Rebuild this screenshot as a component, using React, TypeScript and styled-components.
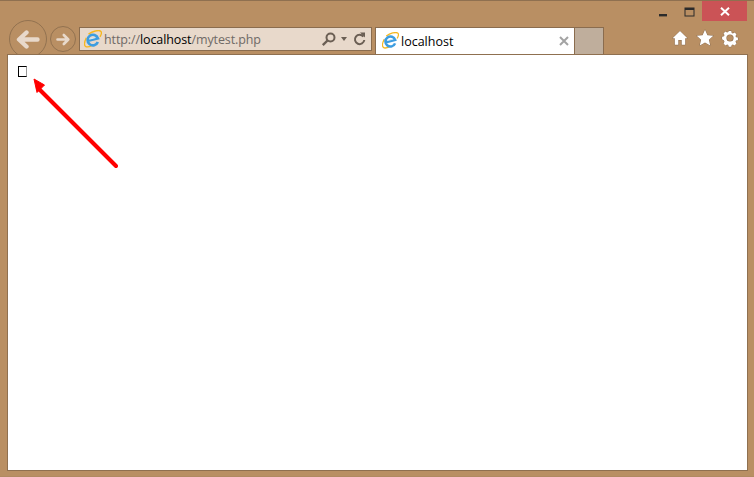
import React from "react";
import styled, { createGlobalStyle } from "styled-components";

const GlobalStyle = createGlobalStyle`
  html, body {
    margin: 0;
    padding: 0;
    background: #b98f63;
  }
  body {
    font-family: "Open Sans", "Liberation Sans", sans-serif;
  }
`;

/** Internet Explorer logo */
function IeLogo({ size }: { size: number }) {
  return (
    <svg width={size} height={size} viewBox="0 0 20 20" style={{ display: "block" }}>
      <path
        d="M5 4.6C9.6 1.4 16 -.4 18.4 1.2c1.6 1.1 1 3.6-.6 6.4"
        fill="none"
        stroke="#f5b71f"
        strokeWidth="1.5"
      />
      <path
        d="M2.6 8.6C.6 12.6 -.1 16.4 1.5 18c1.7 1.6 4.6.7 7.5-.8"
        fill="none"
        stroke="#f5b71f"
        strokeWidth="1.5"
      />
      <g transform="rotate(-14 10 10)">
        <path
          d="M4.2 10.6h11.3A5.9 5.9 0 1 0 14.4 14.6"
          fill="none"
          stroke="#3d9de0"
          strokeWidth="3"
        />
        <path d="M6 9.2h7" stroke="#d8eefb" strokeWidth="1" />
      </g>
    </svg>
  );
}

export default function App() {
  return (
    <>
      <GlobalStyle />
      <Window>
        <CaptionBar>
          <CaptionButton>
            <svg width="10" height="10" viewBox="0 0 10 10">
              <rect x="1" y="7" width="8" height="2.4" fill="#2b2b2b" />
            </svg>
          </CaptionButton>
          <CaptionButton>
            <svg width="11" height="10" viewBox="0 0 11 10">
              <rect x="1" y="1" width="9" height="8" fill="none" stroke="#2b2b2b" />
              <rect x="1" y="1" width="9" height="2" fill="#2b2b2b" />
            </svg>
          </CaptionButton>
          <CloseButton>
            <svg width="10" height="9" viewBox="0 0 10 9">
              <path d="M1 .8L9 8.2M9 .8L1 8.2" stroke="#fff" strokeWidth="2" />
            </svg>
          </CloseButton>
        </CaptionBar>

        <Toolbar>
          <BackButton>
            <svg width="24" height="19" viewBox="0 0 24 19">
              <path d="M21.5 9.5H4M10.5 2.5L3 9.5l7.5 7" fill="none" stroke="#e8d9cb" strokeWidth="4.4" strokeLinejoin="round" strokeLinecap="round" />
            </svg>
          </BackButton>
          <ForwardButton>
            <svg width="15" height="13" viewBox="0 0 15 13">
              <path d="M1.5 6.5h10.5M7.8 2l4.5 4.5L7.8 11" fill="none" stroke="#e8d9cb" strokeWidth="2.6" strokeLinejoin="round" strokeLinecap="round" />
            </svg>
          </ForwardButton>
          <AddressBar>
            <IeLogo size={18} />
            <AddressText>
              http://<strong>localhost</strong>/mytest.php
            </AddressText>
            <svg width="16" height="15" viewBox="0 0 16 15">
              <circle cx="9.5" cy="5.5" r="4" fill="none" stroke="#6b5f54" strokeWidth="2" />
              <path d="M6.5 8.5L1.8 13.2" stroke="#6b5f54" strokeWidth="2.4" />
            </svg>
            <Dropdown />
            <svg width="13" height="14" viewBox="0 0 13 14">
              <path d="M10.4 4.6A4.7 4.7 0 1 0 11.3 8" fill="none" stroke="#6b5f54" strokeWidth="2" />
              <path d="M7 .5h5v5z" fill="#6b5f54" />
            </svg>
          </AddressBar>
          <Tab>
            <IeLogo size={17} />
            <TabTitle>localhost</TabTitle>
            <svg width="10" height="10" viewBox="0 0 10 10">
              <path d="M1 1l8 8M9 1L1 9" stroke="#a3a3a3" strokeWidth="2" />
            </svg>
          </Tab>
          <NewTab />
          <ToolIcons>
            <ToolIcon width="16" height="16" viewBox="0 0 16 16">
              <path d="M8 1L15.4 8.2h-2.2v6.6H9.7V10H6.3v4.8H2.8V8.2H.6z" />
            </ToolIcon>
            <ToolIcon width="18" height="17" viewBox="0 0 18 17">
              <path d="M9 .8l2.4 5.4 5.9.6-4.4 3.9 1.3 5.7L9 13.5l-5.2 2.9 1.3-5.7L.7 6.8l5.9-.6z" />
            </ToolIcon>
            <ToolIcon width="16" height="16" viewBox="0 0 16 16">
              <path
                fillRule="evenodd"
                d="M6.7 1h2.6l.4 1.9 1.2.5 1.7-1 1.9 1.9-1 1.7.5 1.2 1.9.4v2.6l-1.9.4-.5 1.2 1 1.7-1.9 1.9-1.7-1-1.2.5-.4 1.9H6.7l-.4-1.9-1.2-.5-1.7 1-1.9-1.9 1-1.7-.5-1.2L.1 9.3V6.7l1.9-.4.5-1.2-1-1.7 1.9-1.9 1.7 1 1.2-.5zM8 4.4a3.6 3.6 0 1 0 0 7.2 3.6 3.6 0 0 0 0-7.2z"
              />
            </ToolIcon>
          </ToolIcons>
        </Toolbar>

        <Page>
          <MissingGlyph />
          <Arrow width="110" height="120" viewBox="0 0 110 120">
            <path d="M108 110L30 32" stroke="#ff0000" strokeWidth="4" strokeLinecap="round" />
            <path d="M26 23L36.5 29L29 36.5z" fill="#ff0000" stroke="#ff0000" />
          </Arrow>
        </Page>
      </Window>
    </>
  );
}

/** Styled Component */
const Window = styled.div`
  box-sizing: border-box;
  width: 754px;
  height: 477px;
  display: flex;
  flex-direction: column;
  background: #b98f63;
  border-top: 1px solid #8f7050;
  border-bottom: 1px solid #b08a62;
  padding: 0 7px 6px 8px;
  overflow: hidden;
`;

const CaptionBar = styled.div`
  display: flex;
  justify-content: flex-end;
  height: 20px;
  margin-bottom: -1px;
  flex: none;
`;

const CaptionButton = styled.div`
  width: 26px;
  display: flex;
  align-items: center;
  justify-content: center;
  padding-top: 2px;
`;

const CloseButton = styled.div`
  width: 45px;
  background: #cb5356;
  display: flex;
  align-items: center;
  justify-content: center;
`;

const Toolbar = styled.div`
  display: flex;
  align-items: flex-start;
  height: 35px;
  flex: none;
  overflow: hidden;
`;

const NavCircle = styled.div`
  box-sizing: border-box;
  border: 1px solid #927250;
  border-radius: 50%;
  display: flex;
  align-items: center;
  justify-content: center;
  flex: none;
`;

const BackButton = styled(NavCircle)`
  width: 38px;
  height: 38px;
  margin-left: 1px;
`;

const ForwardButton = styled(NavCircle)`
  width: 26px;
  height: 26px;
  margin: 6px 0 0 3px;
`;

const AddressBar = styled.div`
  box-sizing: border-box;
  width: 293px;
  height: 24px;
  margin: 7px 0 0 3px;
  padding: 0 5px 0 4px;
  display: flex;
  align-items: center;
  background: #e8d9cb;
  border: 1px solid #8a6c4e;
  flex: none;
`;

const AddressText = styled.div`
  flex: 1;
  margin-left: 2px;
  padding-top: 1px;
  font-size: 12.5px;
  letter-spacing: -0.1px;
  color: #6f6a66;
  white-space: nowrap;

  strong {
    font-weight: 400;
    color: #000;
  }
`;

const Dropdown = styled.div`
  width: 0;
  height: 0;
  margin: 0 6px 0 4px;
  border-left: 3.5px solid transparent;
  border-right: 3.5px solid transparent;
  border-top: 4px solid #6b5f54;
`;

const Tab = styled.div`
  box-sizing: border-box;
  width: 200px;
  height: 28px;
  margin: 7px 0 0 3px;
  padding: 0 5px 2px 6px;
  display: flex;
  align-items: center;
  background: #fff;
  border: 1px solid #8a6c4e;
  border-bottom: none;
  flex: none;
`;

const TabTitle = styled.div`
  flex: 1;
  margin-left: 2px;
  padding-top: 2px;
  font-size: 12.5px;
  color: #000;
`;

const NewTab = styled.div`
  box-sizing: border-box;
  width: 29px;
  height: 28px;
  margin-top: 7px;
  background: #bfae9c;
  border: 1px solid #8a6c4e;
  border-left: none;
  flex: none;
`;

const ToolIcons = styled.div`
  margin: 9px 0 0 auto;
  padding-right: 9px;
  display: flex;
  align-items: center;
  gap: 8px;
`;

const ToolIcon = styled.svg`
  display: block;
  overflow: visible;

  path {
    fill: #fff;
    stroke: #7d6249;
    stroke-width: 0.8;
    paint-order: stroke;
  }
`;

const Page = styled.div`
  position: relative;
  flex: 1;
  background: #fff;
  box-shadow: 0 0 0 1px #8f7050;
  padding: 11px 10px;
`;

const MissingGlyph = styled.div`
  box-sizing: border-box;
  width: 9px;
  height: 11px;
  border: 1px solid #000;
  border-right: 1px solid #999;
`;

const Arrow = styled.svg`
  position: absolute;
  left: 0;
  top: 1px;
`;
